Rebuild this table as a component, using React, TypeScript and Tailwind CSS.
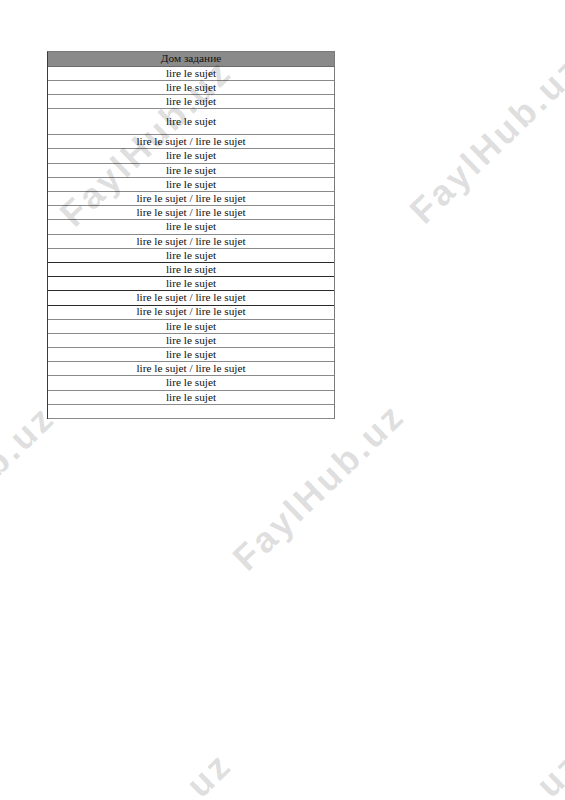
import React from "react";

type Row = { text: string; tall?: boolean; dark?: boolean };

const A = "lire le sujet";
const B = "lire le sujet / lire le sujet";

const rows: Row[] = [
  { text: A },
  { text: A },
  { text: A },
  { text: A, tall: true },
  { text: B },
  { text: A },
  { text: A },
  { text: A },
  { text: B },
  { text: B },
  { text: A },
  { text: B },
  { text: A, dark: true },
  { text: A, dark: true },
  { text: A, dark: true },
  { text: B, dark: true },
  { text: B },
  { text: A },
  { text: A },
  { text: A },
  { text: B },
  { text: A },
  { text: A },
  { text: "" },
];

const marks = [
  { x: 146, y: 143 },
  { x: 496, y: 140 },
  { x: -31, y: 489 },
  { x: 319, y: 487 },
  { x: 146, y: 836 },
  { x: 496, y: 836 },
];

function Watermark({ x, y }: { x: number; y: number }) {
  return (
    <div className="absolute w-0 h-0" style={{ left: x, top: y }}>
      <span
        className="absolute left-0 top-0 -translate-x-1/2 -translate-y-1/2 -rotate-[44deg] whitespace-nowrap text-[36px] font-bold leading-none tracking-[3px] text-black/[0.14]"
        style={{ fontFamily: '"Liberation Sans", Arial, sans-serif' }}
      >
        FaylHub.uz
      </span>
    </div>
  );
}

export default function App() {
  return (
    <div className="relative w-[565px] h-[800px] overflow-hidden bg-white">
      <div className="pt-[51px] pl-[47px]">
        <div
          className="w-[288px] border-t border-r border-[#7a7a7a] border-l-[1.5px] border-l-[#3a3a3a] text-[11.3px] leading-none text-[#111]"
          style={{ fontFamily: '"Liberation Serif", "Times New Roman", serif' }}
        >
          <div className="h-[14.7px] flex items-center justify-center bg-[#8a8a8a] border-b border-[#6a6a6a]">
            Дом задание
          </div>
          {rows.map((r, i) => (
            <div
              key={i}
              className={
                "flex items-center justify-center border-b " +
                (r.tall ? "h-[26px] " : "h-[14.2px] ") +
                (r.dark ? "border-[#2a2a2a]" : "border-[#8a8a8a]")
              }
            >
              {r.text}
            </div>
          ))}
        </div>
      </div>
      <div className="pointer-events-none absolute inset-0">
        {marks.map((m, i) => (
          <Watermark key={i} x={m.x} y={m.y} />
        ))}
      </div>
    </div>
  );
}
